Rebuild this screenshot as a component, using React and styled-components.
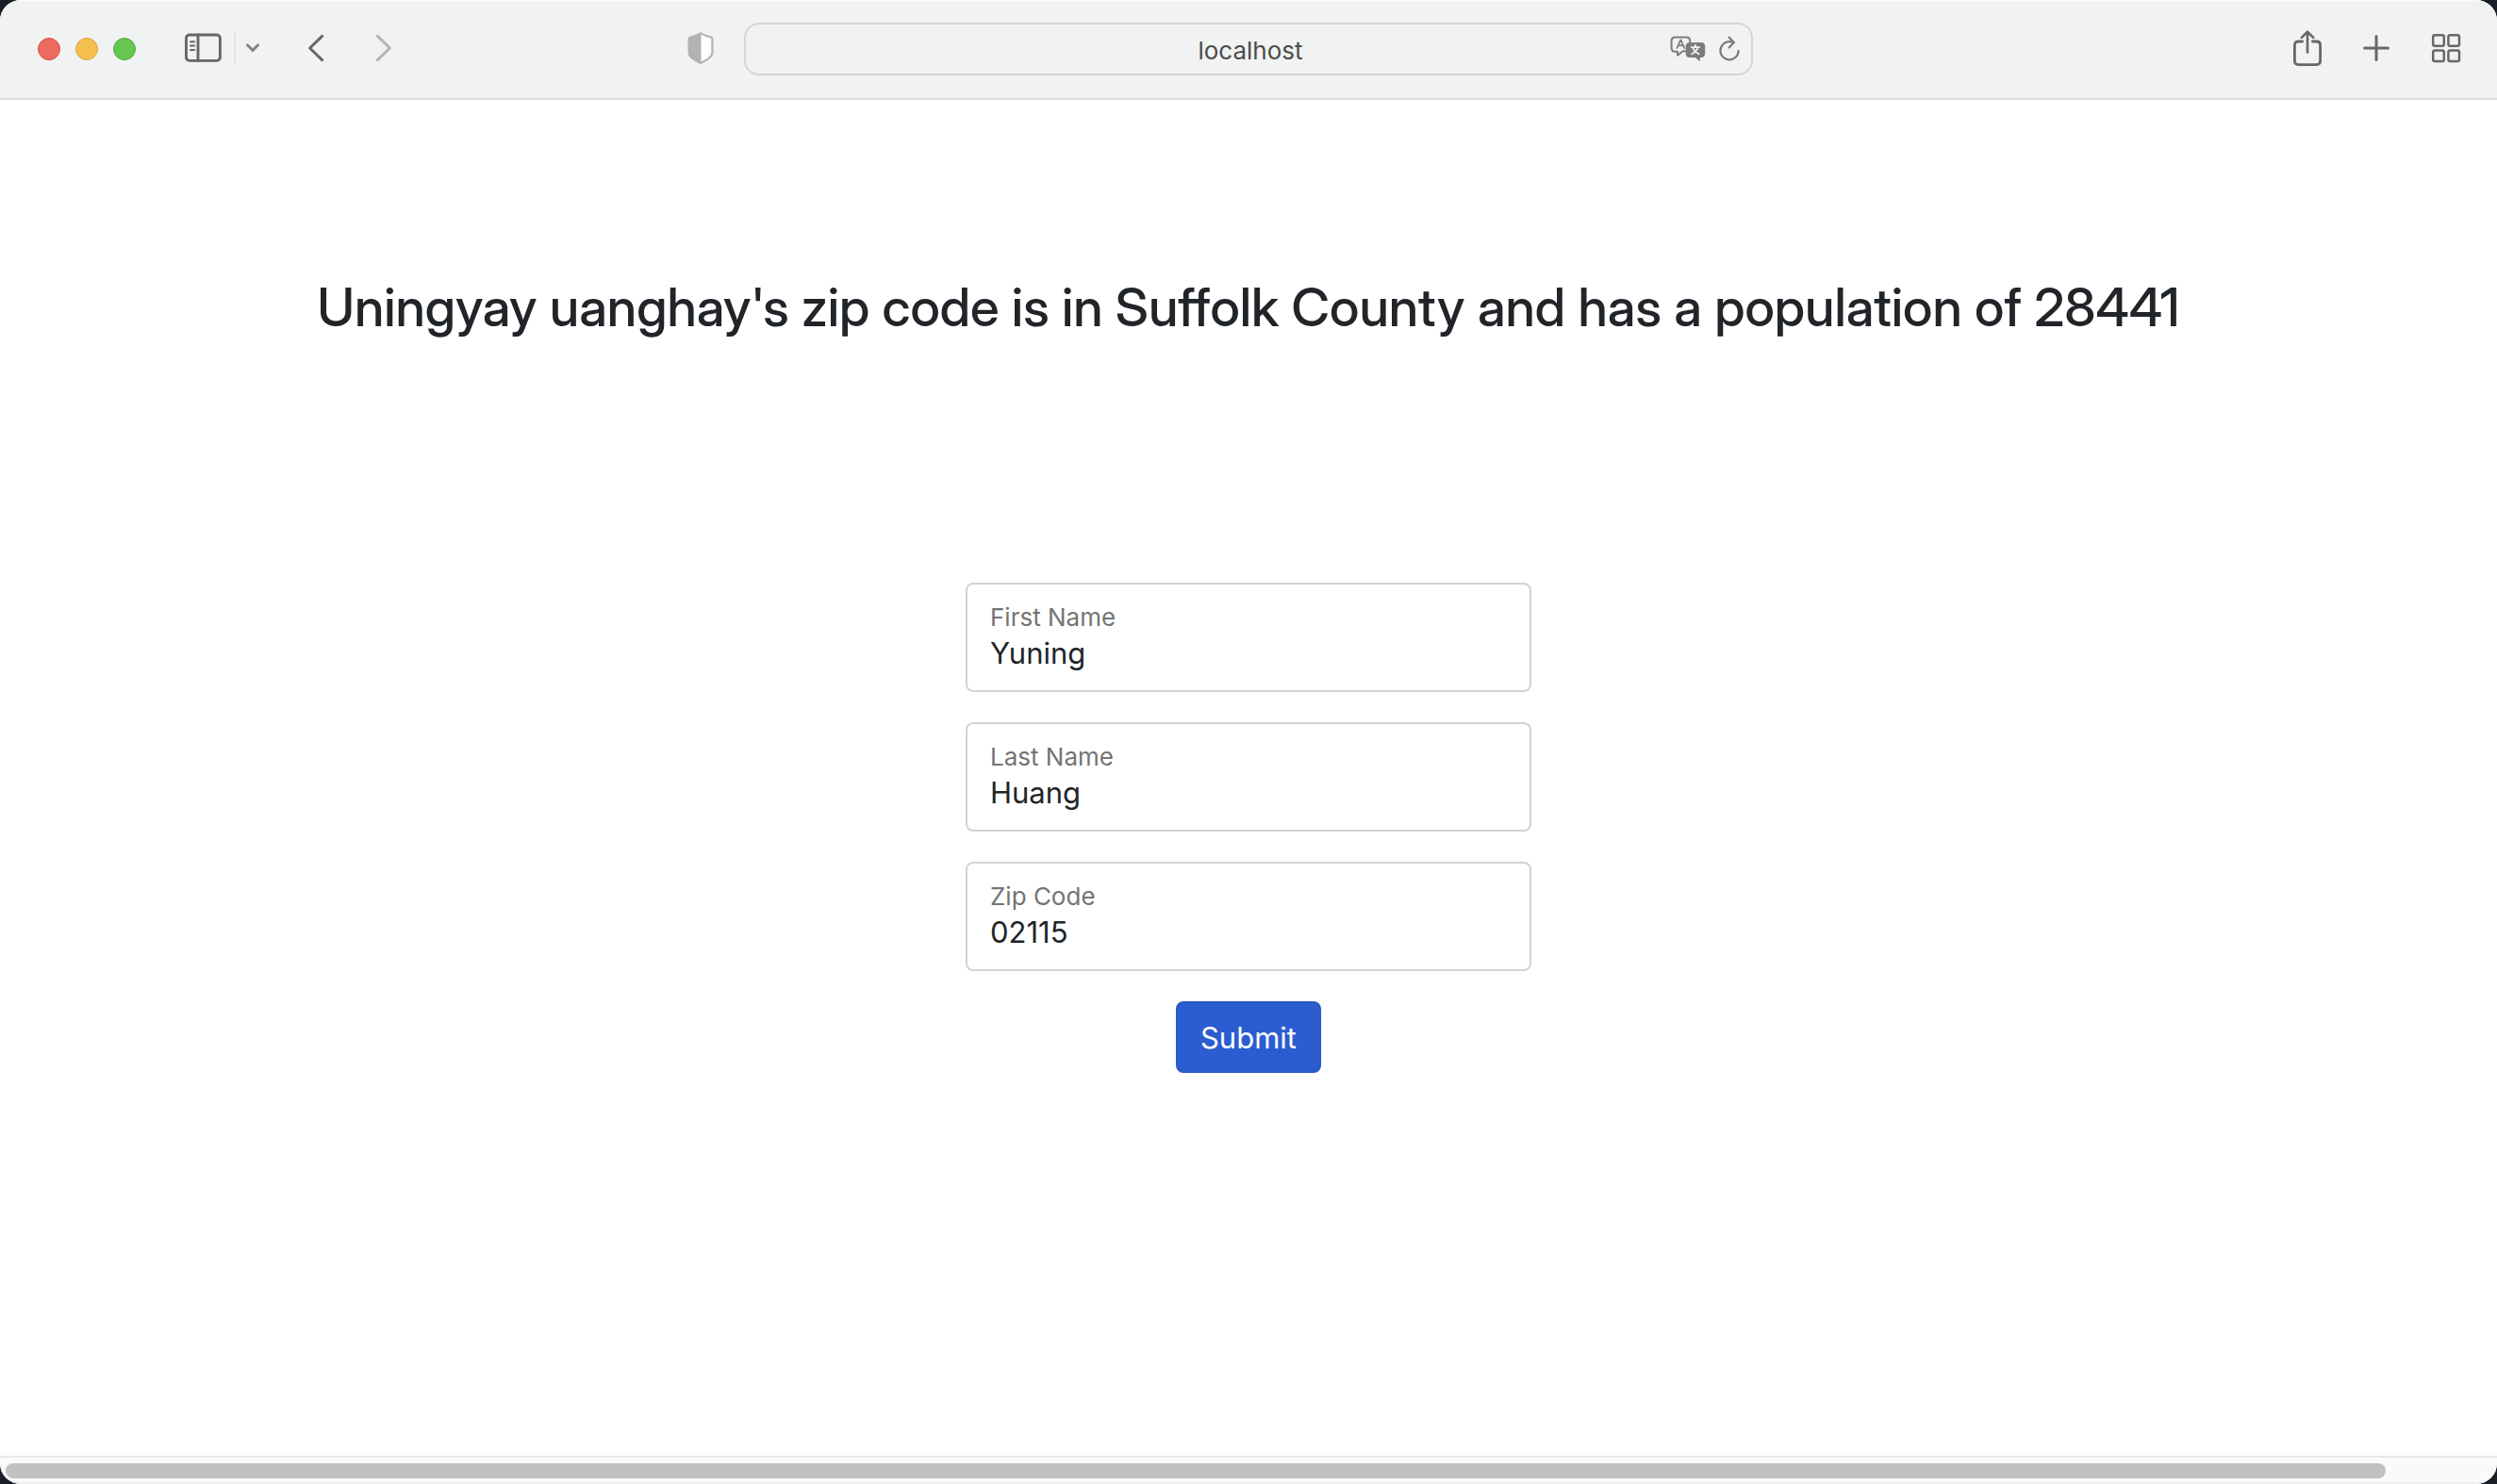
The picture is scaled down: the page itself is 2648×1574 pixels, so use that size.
import React, { useState } from "react";
import styled, { createGlobalStyle } from "styled-components";

const GlobalStyle = createGlobalStyle`
  *, *::before, *::after { box-sizing: border-box; }
  body {
    margin: 0;
    background: #1c1e27;
    color: #212529;
    font-family: Inter, "Liberation Sans", sans-serif;
  }
  button, input { font: inherit; color: inherit; margin: 0; }
`;

const Window = styled.div`
  display: flex;
  flex-direction: column;
  min-height: 100vh;
  overflow: hidden;
  border-radius: 22px;
  background: #ffffff;
`;

const Toolbar = styled.header`
  display: grid;
  grid-template-columns: 1fr minmax(0, 1070px) 1fr;
  align-items: start;
  height: 106px;
  padding-top: 24px;
  background: #f1f3f2;
  border-bottom: 2px solid #dbdcdc;
  box-shadow: inset 0 1px 0 #fbfcfc;
`;

const ToolbarSide = styled.div`
  display: flex;
  align-items: center;
  height: 56px;
  padding: ${(p) => (p.$end ? "0 38px 2px 0" : "0 32px 2px 40px")};
  justify-content: ${(p) => (p.$end ? "flex-end" : "flex-start")};
  gap: ${(p) => (p.$end ? "43px" : "0")};
`;

const Lights = styled.div`
  display: flex;
  gap: 16px;
  margin-right: 52px;
  padding-top: 2px;
`;

const Light = styled.button`
  width: 24px;
  height: 24px;
  padding: 0;
  border: 1px solid ${(p) => p.$edge};
  border-radius: 50%;
  background: ${(p) => p.$fill};
`;

const IconButton = styled.button`
  display: flex;
  flex: none;
  padding: 0;
  border: 0;
  background: none;
  color: ${(p) => p.$color || "#666867"};
  margin-right: ${(p) => p.$after || 0}px;
  margin-left: ${(p) => (p.$push ? "auto" : "0")};
  svg { display: block; fill: none; stroke: currentColor; stroke-linecap: round; stroke-linejoin: round; }
`;

const Divider = styled.span`
  width: 2px;
  height: 36px;
  margin-right: 10px;
  background: #e2e4e3;
`;

const AddressBar = styled.form`
  display: flex;
  align-items: center;
  height: 56px;
  padding-right: 11px;
  border: 2px solid #d4d6d5;
  border-radius: 16px;
`;

const AddressInput = styled.input`
  flex: 1;
  min-width: 0;
  padding: 4px 0 0 90px;
  border: 0;
  outline: 0;
  background: none;
  color: #4b4c4c;
  font-size: 26px;
  line-height: 32px;
  text-align: center;
`;

const Page = styled.main`
  flex: 1;
  display: flex;
  flex-direction: column;
  align-items: center;
  padding: 186px 32px 64px;
`;

const Heading = styled.h1`
  margin: 0 0 258px;
  font-family: "Inter Display", Inter, "Liberation Sans", sans-serif;
  font-size: 56px;
  line-height: 68px;
  font-weight: 500;
  text-align: center;
`;

const Form = styled.form`
  display: flex;
  flex-direction: column;
  align-items: center;
  gap: 32px;
  width: 100%;
  max-width: 600px;
`;

const Field = styled.div`
  width: 100%;
  height: 116px;
  padding: 16px 24px;
  border: 2px solid #ced4da;
  border-radius: 8px;
`;

const Label = styled.label`
  display: block;
  color: #737475;
  font-size: 26px;
  line-height: 38px;
`;

const TextInput = styled.input`
  display: block;
  width: 100%;
  padding: 0;
  border: 0;
  outline: 0;
  background: none;
  font-size: 31px;
  line-height: 38px;
  height: 38px;
`;

const Submit = styled.button`
  height: 76px;
  padding: 2px 24px 0;
  border: 2px solid #2858c6;
  border-radius: 8px;
  background: #2b5dd1;
  color: #ffffff;
  font-size: 31px;
  line-height: 48px;
`;

const ScrollTrack = styled.div`
  height: 30px;
  padding: 6px;
  background: #fafafa;
  border-top: 2px solid #e8e8e8;
  border-bottom: 2px solid #eeeeee;
`;

const ScrollThumb = styled.div`
  width: 96%;
  max-width: 2524px;
  height: 16px;
  border-radius: 8px;
  background: #c1c1c1;
`;

const fields = [
  { id: "firstName", label: "First Name", value: "Yuning" },
  { id: "lastName", label: "Last Name", value: "Huang" },
  { id: "zipCode", label: "Zip Code", value: "02115" },
];

const SidebarIcon = () => (
  <svg width="40" height="32" viewBox="0 0 40 32" strokeWidth="2.9">
    <rect x="1.4" y="2" width="36" height="27.4" rx="3.6" />
    <path d="M14 2v27.4" />
    <path d="M6 9.2h4.2M6 13.6h4.2M6 18h4.2" strokeWidth="2" />
  </svg>
);

const SmallChevron = () => (
  <svg width="16" height="12" viewBox="0 0 16 12" strokeWidth="3">
    <path d="M2.4 2.8 8 8.4l5.6-5.6" />
  </svg>
);

const Chevron = ({ forward }) => (
  <svg width="18" height="32" viewBox="0 0 18 32" strokeWidth="3">
    <path d={forward ? "M2.4 3.4 15.4 16 2.4 28.6" : "M15.6 3.4 2.6 16l13 12.6"} />
  </svg>
);

const ShieldIcon = () => (
  <svg width="28" height="34" viewBox="0 0 28 34" strokeWidth="2.2">
    <path
      d="M14 1.4c3.8 2 7.6 3.3 11.4 4.3.6.2 1 .6 1 1.2v14.5c0 5.2-6.4 8.4-12.4 11.6C8 29.8 1.6 26.6 1.6 21.4V6.9c0-.6.4-1 1-1.2C6.4 4.7 10.2 3.4 14 1.4Z"
      fill="#fdfdfd"
    />
    <path
      d="M14 1.4v31.6C8 29.8 1.6 26.6 1.6 21.4V6.9c0-.6.4-1 1-1.2C6.4 4.7 10.2 3.4 14 1.4Z"
      fill="currentColor"
      strokeWidth="1"
    />
  </svg>
);

const TranslateIcon = () => (
  <svg width="38" height="28" viewBox="0 0 38 28" strokeWidth="2">
    <path d="M16 16.2 13.5 16.3 8 20.7v-4H5.6c-2.5 0-4-1.5-4-4V5.4c0-2.5 1.5-4 4-4h11.6c2.5 0 4 1.5 4 4v1.4" />
    <path d="m7.4 13 3.7-8.6h.4l3.7 8.6M8.7 10.2h5.2" strokeWidth="1.7" />
    <path
      d="M20.9 7h12c2.7 0 4.3 1.6 4.3 4.3v7.4c0 2.6-1.5 4.2-4.2 4.2h-1.2v4.3L26.7 23h-5.8c-2.7 0-4.3-1.6-4.3-4.3v-7.4C16.6 8.6 18.2 7 20.9 7Z"
      fill="currentColor"
      stroke="none"
    />
    <path
      d="M26.9 9.8v2M22.8 12.2h8.2M29.4 12.4c-.8 3.3-2.9 5.4-6.2 6.8M24.4 12.4c.8 3.3 2.9 5.4 6.2 6.8"
      stroke="#f1f3f2"
      strokeWidth="1.8"
    />
  </svg>
);

const ReloadIcon = () => (
  <svg width="24" height="28" viewBox="0 0 24 28" strokeWidth="2.2">
    <path d="M21.6 15.8a9.6 9.6 0 1 1-9.6-9.6c1.5 0 3 .2 4.6.8" />
    <path d="m11.6 1.6 5.2 5.4-5.2 5.4" />
  </svg>
);

const ShareIcon = () => (
  <svg width="30" height="38" viewBox="0 0 30 38" strokeWidth="2.8">
    <path d="M9.6 12H5.4c-2.6 0-4 1.4-4 4v16.6c0 2.6 1.4 4 4 4h19.2c2.6 0 4-1.4 4-4V16c0-2.6-1.4-4-4-4h-4.2" />
    <path d="M15 23.4V2M8.8 7.8 15 1.6l6.2 6.2" strokeWidth="2.6" />
  </svg>
);

const PlusIcon = () => (
  <svg width="30" height="30" viewBox="0 0 30 30" strokeWidth="3">
    <path d="M15 2.6v24.8M2.6 15h24.8" />
  </svg>
);

const GridIcon = () => (
  <svg width="32" height="32" viewBox="0 0 32 32" strokeWidth="2.5">
    <rect x="2.2" y="2.2" width="11.6" height="11.6" rx="2" />
    <rect x="18.4" y="2.2" width="11.6" height="11.6" rx="2" />
    <rect x="2.2" y="18.4" width="11.6" height="11.6" rx="2" />
    <rect x="18.4" y="18.4" width="11.6" height="11.6" rx="2" />
  </svg>
);

export default function App() {
  const [values, setValues] = useState(
    Object.fromEntries(fields.map((f) => [f.id, f.value]))
  );

  return (
    <>
      <GlobalStyle />
      <Window>
        <Toolbar>
          <ToolbarSide>
            <Lights>
              <Light aria-label="Close" $fill="#ec6a5e" $edge="#d5544a" />
              <Light aria-label="Minimize" $fill="#f4bf4f" $edge="#dba33c" />
              <Light aria-label="Zoom" $fill="#66c750" $edge="#52ab3c" />
            </Lights>
            <IconButton aria-label="Sidebar" $after={12}><SidebarIcon /></IconButton>
            <Divider />
            <IconButton aria-label="Tab groups" $color="#838588" $after={50}><SmallChevron /></IconButton>
            <IconButton aria-label="Back" $after={54}><Chevron /></IconButton>
            <IconButton aria-label="Forward" $color="#b4b6b5"><Chevron forward /></IconButton>
            <IconButton aria-label="Privacy report" $color="#b1b3b2" $push><ShieldIcon /></IconButton>
          </ToolbarSide>
          <AddressBar onSubmit={(e) => e.preventDefault()}>
            <AddressInput aria-label="Address" defaultValue="localhost" />
            <IconButton type="button" aria-label="Translate" $color="#7b7d7c" $after={13}><TranslateIcon /></IconButton>
            <IconButton type="button" aria-label="Reload" $color="#7b7d7c"><ReloadIcon /></IconButton>
          </AddressBar>
          <ToolbarSide $end>
            <IconButton aria-label="Share"><ShareIcon /></IconButton>
            <IconButton aria-label="New tab"><PlusIcon /></IconButton>
            <IconButton aria-label="Tab overview"><GridIcon /></IconButton>
          </ToolbarSide>
        </Toolbar>
        <Page>
          <Heading>Uningyay uanghay's zip code is in Suffolk County and has a population of 28441</Heading>
          <Form onSubmit={(e) => e.preventDefault()}>
            {fields.map((f) => (
              <Field key={f.id}>
                <Label htmlFor={f.id}>{f.label}</Label>
                <TextInput
                  id={f.id}
                  value={values[f.id]}
                  onChange={(e) => setValues({ ...values, [f.id]: e.target.value })}
                />
              </Field>
            ))}
            <Submit type="submit">Submit</Submit>
          </Form>
        </Page>
        <ScrollTrack>
          <ScrollThumb />
        </ScrollTrack>
      </Window>
    </>
  );
}
